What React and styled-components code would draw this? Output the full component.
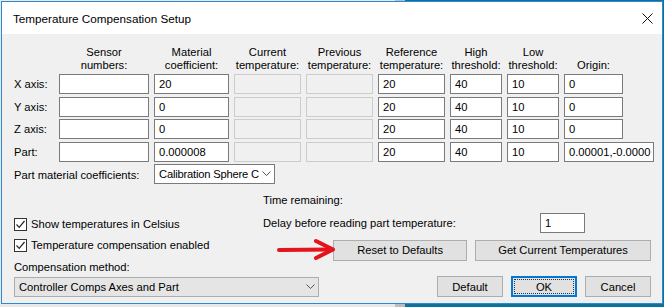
import React from 'react'
import styled, { createGlobalStyle } from 'styled-components'

const GlobalStyle = createGlobalStyle`
  html, body { margin: 0; padding: 0; }
  body {
    width: 664px;
    height: 307px;
    overflow: hidden;
    font-family: "Liberation Sans", Arial, sans-serif;
  }
`

const Desktop = styled.div`
  position: relative;
  width: 664px;
  height: 307px;
  padding: 1px 0 0 1px;
  box-sizing: border-box;
  background: linear-gradient(to right, #e9e9e9 0, #e9e9e9 395px, #bdbdbd 395px, #bdbdbd 405px, #0d7199 405px);
`

const Dialog = styled.div`
  width: 662px;
  height: 303px;
  box-sizing: border-box;
  border: 1px solid #2a8ad8;
  display: flex;
  flex-direction: column;
  background: #f0f0f0;
  color: #000;
  font-size: 11.2px;
`

const TitleBar = styled.div`
  height: 32px;
  flex-shrink: 0;
  background: #fff;
  display: flex;
  align-items: center;
  justify-content: space-between;
  padding: 0 9px 0 11px;
  font-size: 11.7px;
`

const Body = styled.div`
  flex: 1;
  padding: 12px 0 0 12px;
  display: flex;
  flex-direction: column;
`

const Table = styled.div`
  display: grid;
  grid-template-columns: 40px 90px 75px 67px 67px 67px 52px 52px 59px;
  grid-template-rows: 26px;
  grid-auto-rows: 20px;
  column-gap: 5px;
  row-gap: 2.4px;
`

const Head = styled.div`
  text-align: center;
  line-height: 13px;
  white-space: nowrap;
  align-self: end;
`

const RowLabel = styled.div`
  line-height: 20px;
  white-space: nowrap;
  grid-column: ${p => p.$span || 'auto'};
  padding-top: ${p => p.$drop || 0}px;
`

const TextBox = styled.div`
  box-sizing: border-box;
  height: 20px;
  width: ${p => (p.$w ? `${p.$w}px` : '100%')};
  border: 1px solid ${p => (p.$disabled ? '#cccccc' : '#7a7a7a')};
  background: ${p => (p.$disabled ? '#f0f0f0' : '#ffffff')};
  padding: 0 4px;
  line-height: 18px;
  white-space: nowrap;
  overflow: hidden;
`

const Combo = styled.div`
  box-sizing: border-box;
  height: ${p => p.$h || 20}px;
  width: ${p => p.$w}px;
  border: 1px solid ${p => (p.$flat ? '#adadad' : '#7a7a7a')};
  background: ${p => (p.$flat ? '#e5e5e5' : '#ffffff')};
  display: flex;
  align-items: center;
  padding: 0 3px 0 4px;
  gap: 2px;
  grid-column: ${p => p.$col || 'auto'};
`

const ComboText = styled.span`
  flex: 1;
  white-space: nowrap;
  overflow: hidden;
  letter-spacing: ${p => p.$tight ? '-0.2px' : 'normal'};
`

const Lower = styled.div`
  display: grid;
  grid-template-columns: 249px 388px;
  margin-top: 10px;
  flex: 1;
`

const LeftCol = styled.div`
  display: flex;
  flex-direction: column;
  padding-top: 24px;
`

const RightCol = styled.div`
  display: flex;
  flex-direction: column;
  padding-bottom: 6px;
`

const Check = styled.label`
  display: flex;
  align-items: center;
  gap: 4px;
  height: 13px;
  line-height: 13px;
  margin-bottom: ${p => p.$mb || 0}px;
  white-space: nowrap;
`

const Box = styled.span`
  width: 13px;
  height: 13px;
  box-sizing: border-box;
  border: 1px solid #333;
  background: #fff;
  display: flex;
  align-items: center;
  justify-content: center;
`

const FieldLabel = styled.div`
  line-height: 13px;
  margin: ${p => p.$m || '0'};
  white-space: nowrap;
`

const DelayRow = styled.div`
  display: flex;
  align-items: center;
  margin-top: 6px;
  height: 20px;
`

const DelayLabel = styled.span`
  width: 277px;
  white-space: nowrap;
`

const ButtonRow = styled.div`
  display: flex;
  gap: ${p => p.$gap || 8}px;
  padding-left: ${p => p.$pl || 0}px;
  margin-top: ${p => p.$mt || 0};
  justify-content: ${p => p.$end ? 'flex-end' : 'flex-start'};
  padding-right: ${p => p.$pr || 0}px;
`

const Button = styled.div`
  box-sizing: border-box;
  width: ${p => p.$w}px;
  height: 21px;
  background: #e1e1e1;
  border: ${p => (p.$focus ? '2px solid #0078d7' : '1px solid #adadad')};
  display: flex;
  align-items: center;
  justify-content: center;
  white-space: nowrap;
  position: relative;
  &::after {
    content: '';
    display: ${p => (p.$focus ? 'block' : 'none')};
    position: absolute;
    inset: 1px;
    border: 1px dotted #333;
  }
`

const Arrow = styled.svg`
  position: absolute;
  left: 274px;
  top: 236px;
`

const Chevron = () => (
  <svg width="9" height="5" viewBox="0 0 9 5" style={{ flexShrink: 0 }}>
    <path d="M0.5 0.5 L4.5 4.5 L8.5 0.5" fill="none" stroke="#555" strokeWidth="1" />
  </svg>
)

const Tick = () => (
  <svg width="11" height="11" viewBox="0 0 11 11">
    <path d="M1.5 5.5 L4.2 8.3 L9.5 2" fill="none" stroke="#222" strokeWidth="1.2" />
  </svg>
)

const rows = [
  { label: 'X axis:', mat: '20', origin: '0' },
  { label: 'Y axis:', mat: '0', origin: '0' },
  { label: 'Z axis:', mat: '0', origin: '0' },
  { label: 'Part:', mat: '0.000008', origin: '0.00001,-0.0000', wide: true },
]

const heads = [
  ['', ''],
  ['Sensor', 'numbers:'],
  ['Material', 'coefficient:'],
  ['Current', 'temperature:'],
  ['Previous', 'temperature:'],
  ['Reference', 'temperature:'],
  ['High', 'threshold:'],
  ['Low', 'threshold:'],
  ['', 'Origin:'],
]

export default function App() {
  return (
    <Desktop>
      <GlobalStyle />
      <Dialog>
        <TitleBar>
          <span>Temperature Compensation Setup</span>
          <svg width="11" height="11" viewBox="0 0 11 11">
            <path d="M0.5 0.5 L10.5 10.5 M10.5 0.5 L0.5 10.5" stroke="#111" strokeWidth="1" />
          </svg>
        </TitleBar>
        <Body>
          <Table>
            {heads.map((h, i) => (
              <Head key={i}>
                {h[0]}
                <br />
                {h[1]}
              </Head>
            ))}
            {rows.map(r => (
              <React.Fragment key={r.label}>
                <RowLabel>{r.label}</RowLabel>
                <TextBox />
                <TextBox>{r.mat}</TextBox>
                <TextBox $disabled />
                <TextBox $disabled />
                <TextBox>20</TextBox>
                <TextBox>40</TextBox>
                <TextBox>10</TextBox>
                <TextBox $w={r.wide ? 90 : undefined}>{r.origin}</TextBox>
              </React.Fragment>
            ))}
            <RowLabel $span="1 / 3" $drop={1}>Part material coefficients:</RowLabel>
            <Combo $w={121} $col="3 / 5">
              <ComboText $tight>Calibration Sphere C</ComboText>
              <Chevron />
            </Combo>
          </Table>
          <Lower>
            <LeftCol>
              <Check $mb={8}>
                <Box><Tick /></Box>
                Show temperatures in Celsius
              </Check>
              <Check>
                <Box><Tick /></Box>
                Temperature compensation enabled
              </Check>
              <FieldLabel $m="9px 0 3px">Compensation method:</FieldLabel>
              <Combo $w={305} $flat>
                <ComboText>Controller Comps Axes and Part</ComboText>
                <Chevron />
              </Combo>
            </LeftCol>
            <RightCol>
              <FieldLabel>Time remaining:</FieldLabel>
              <DelayRow>
                <DelayLabel>Delay before reading part temperature:</DelayLabel>
                <TextBox $w={45}>1</TextBox>
              </DelayRow>
              <ButtonRow $pl={70} $mt="7px">
                <Button $w={135}>Reset to Defaults</Button>
                <Button $w={177}>Get Current Temperatures</Button>
              </ButtonRow>
              <ButtonRow $end $gap={8} $mt="auto" $pr={0}>
                <Button $w={66}>Default</Button>
                <Button $w={66} $focus>OK</Button>
                <Button $w={66}>Cancel</Button>
              </ButtonRow>
            </RightCol>
          </Lower>
        </Body>
      </Dialog>
      <Arrow width="64" height="26" viewBox="0 0 64 26">
        <path d="M5 14 L58 13.5" stroke="#e3141c" strokeWidth="4" strokeLinecap="round" fill="none" />
        <path d="M42 5 L59 13.5 L42 22" stroke="#e3141c" strokeWidth="4" strokeLinecap="round" strokeLinejoin="round" fill="none" />
      </Arrow>
    </Desktop>
  )
}
